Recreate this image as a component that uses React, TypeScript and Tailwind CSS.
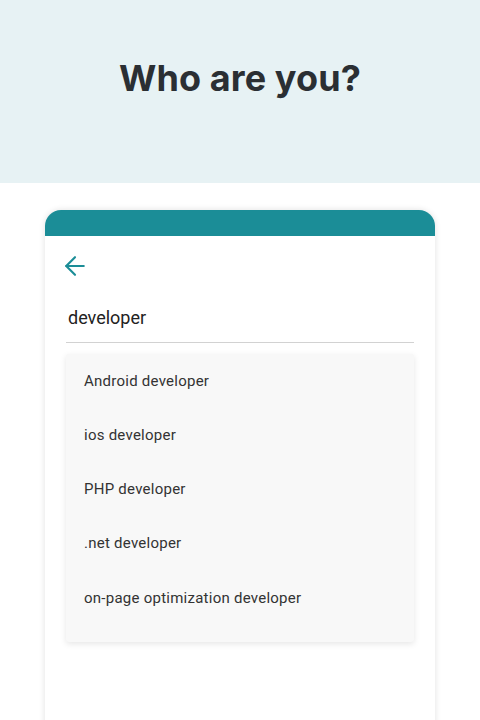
import { ArrowLeft } from 'lucide-react';

const suggestions = [
    'Android developer',
    'ios developer',
    'PHP developer',
    '.net developer',
    'on-page optimization developer',
];

const App = () => {
    return (
        <div className="min-h-screen bg-white" style={{ fontFamily: 'Roboto, "Liberation Sans", sans-serif' }}>
            <div className="h-[183px] bg-[#e7f2f4] flex items-center justify-center pb-[27px]">
                <h1
                    className="text-[36px] font-bold text-[#2b2f33] tracking-[0.1px]"
                    style={{ fontFamily: 'Inter, "Noto Sans", sans-serif' }}
                >
                    Who are you?
                </h1>
            </div>

            <div className="px-[45px] pt-[27px]">
                <div className="rounded-t-[16px] bg-white shadow-[0_0_6px_rgba(0,0,0,0.12)] min-h-[520px]">
                    <div className="h-[26px] rounded-t-[16px] bg-[#1b8d97]" />
                    <div className="px-[21px] pt-[15px]">
                        <button className="flex text-[#1b8d97] -ml-[6px]">
                            <ArrowLeft className="w-[30px] h-[30px]" strokeWidth={1.7} />
                        </button>
                        <div className="mt-[23px] border-b border-[#d2d2d2] pb-[11px] pl-[2px]">
                            <span className="text-[18px] leading-[27px] text-[#222]">developer</span>
                        </div>
                        <ul className="mt-[11px] bg-[#f8f8f8] rounded-[3px] shadow-[0_2px_6px_rgba(0,0,0,0.1)] pb-[16px]">
                            {suggestions.map((s, i) => (
                                <li
                                    key={s}
                                    className={`flex items-center px-[18px] text-[15px] tracking-[0.25px] text-[#333] ${i === suggestions.length - 1 ? 'h-[56px]' : 'h-[54px]'}`}
                                >
                                    {s}
                                </li>
                            ))}
                        </ul>
                    </div>
                </div>
            </div>
        </div>
    );
};

export default App;
